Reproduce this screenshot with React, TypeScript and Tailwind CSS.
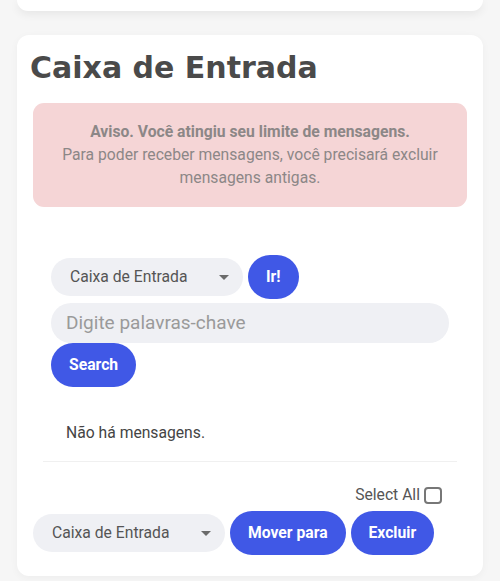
import React from "react";

const Caret = () => (
  <svg width="10" height="5" viewBox="0 0 10 5" className="shrink-0">
    <path d="M0 0 L10 0 L5 5 Z" fill="#6b6b6b" />
  </svg>
);

const Select = () => (
  <div className="flex h-[38px] w-[192px] shrink-0 items-center justify-between rounded-full bg-[#eff0f4] pl-[19px] pr-[14px] text-[15.7px] text-[#555]">
    <span>Caixa de Entrada</span>
    <Caret />
  </div>
);

const Btn = ({ children }: { children: React.ReactNode }) => (
  <button className="flex h-[44px] shrink-0 items-center justify-center rounded-full bg-[#4058e6] px-[18px] text-[15.7px] font-bold text-white">
    {children}
  </button>
);

export default function App() {
  return (
    <div
      className="min-h-[581px] w-[500px] overflow-hidden bg-[#f6f6f6]"
      style={{ fontFamily: "Roboto, 'Liberation Sans', sans-serif" }}
    >
      <div className="mx-[17px] h-[11px] rounded-b-[12px] bg-white shadow-[0_3px_10px_rgba(0,0,0,0.07)]" />
      <div className="mx-[17px] mt-[24px] rounded-[12px] bg-white px-4 pb-[21px] pt-[15px] shadow-[0_2px_8px_rgba(0,0,0,0.04)]">
        <h1
          className="ml-[-3px] text-[30px] font-bold leading-[36px] text-[#4a4a4a]"
          style={{ fontFamily: "'DejaVu Sans', sans-serif" }}
        >
          Caixa de Entrada
        </h1>
        <div className="mt-[17px] rounded-[11px] bg-[#f5d5d6] px-4 pb-[18px] pt-[17px] text-center text-[15.7px] leading-[23px] text-[#8c8787]">
          <div className="font-bold">Aviso. Você atingiu seu limite de mensagens.</div>
          <div>Para poder receber mensagens, você precisará excluir mensagens antigas.</div>
        </div>

        <div className="mt-[48px] px-[18px]">
          <div className="flex h-[44px] items-center gap-[5px]">
            <Select />
            <Btn>Ir!</Btn>
          </div>
          <div className="mt-[4px] flex h-[40px] w-full items-center rounded-full bg-[#eff0f4] pl-[15px] text-[19px] text-[#9a9a9a]">
            Digite palavras-chave
          </div>
          <div className="flex">
            <Btn>Search</Btn>
          </div>
        </div>

        <div className="mx-[10px] mt-[24px] border-b border-[#f0f0f0] pb-[17px] pl-[23px] pt-[11px] text-[15.7px] leading-[22px] text-[#444]">
          Não há mensagens.
        </div>

        <div className="mr-[25px] mt-[22px] flex h-[22px] items-center justify-end gap-[4px] text-[15.7px] text-[#555]">
          <span>Select All</span>
          <span className="box-border h-[17px] w-[18px] rounded-[4px] border-2 border-[#777]" />
        </div>

        <div className="mt-[5px] flex items-center gap-[5px]">
          <Select />
          <Btn>Mover para</Btn>
          <Btn>Excluir</Btn>
        </div>
      </div>
    </div>
  );
}
